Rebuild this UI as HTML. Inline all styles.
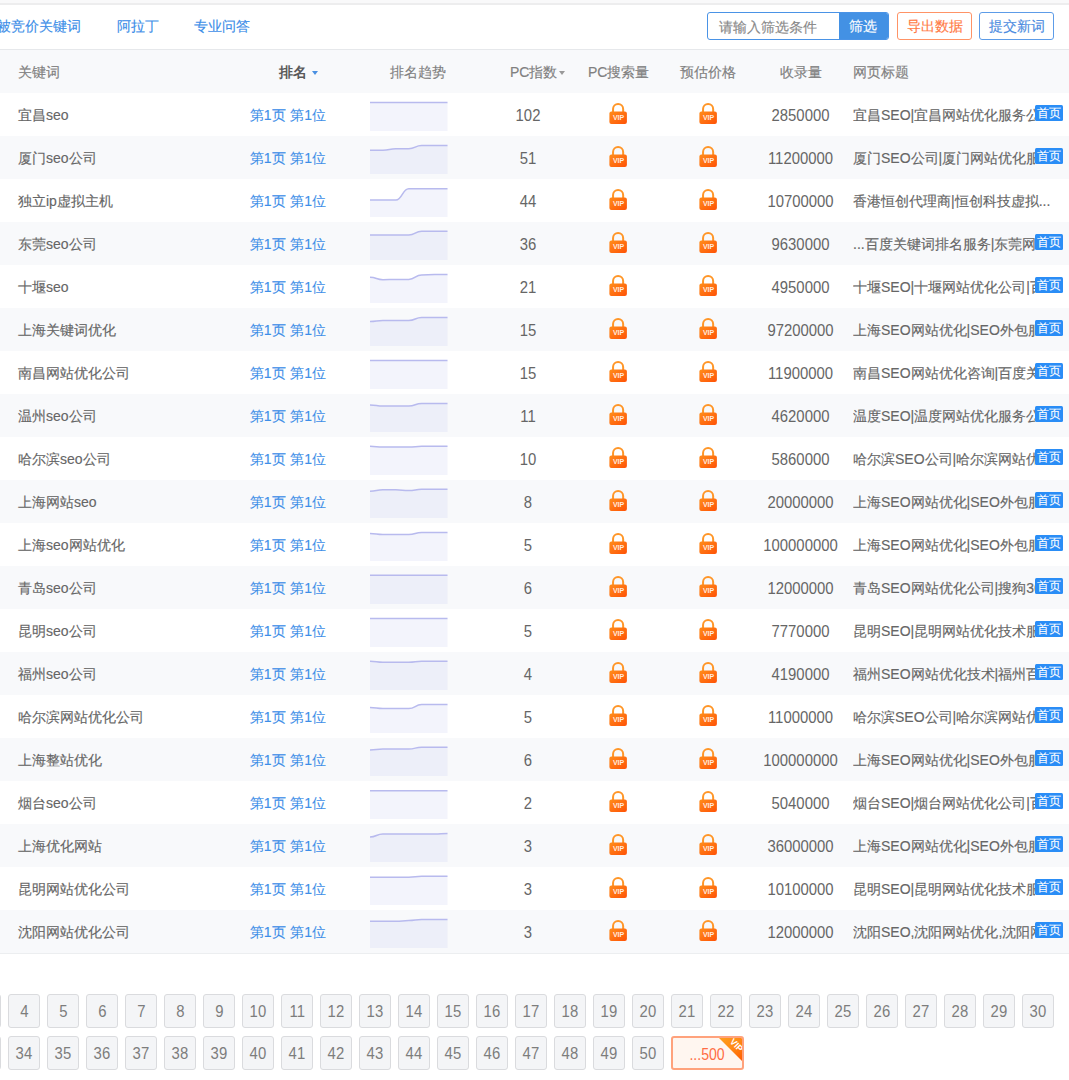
<!DOCTYPE html>
<html><head><meta charset="utf-8"><style>
*{margin:0;padding:0;box-sizing:border-box}
html,body{width:1069px;height:1080px;overflow:hidden;background:#fff;font-family:"Liberation Sans",sans-serif;font-size:14px;color:#666;-webkit-text-stroke:0.15px currentColor}
.topstrip{position:absolute;left:0;top:0;width:1069px;height:3px;background:#f9f9fa}
.topline{position:absolute;left:0;top:3px;width:1069px;height:2px;background:#ededee}
.tab{position:absolute;top:17px;line-height:18px;color:#3d8ee8;font-size:14px;white-space:nowrap}
.inp{position:absolute;left:707px;top:12px;width:182px;height:28px;border:1px solid #4a93e6;border-radius:3px;overflow:hidden}
.inp .ph{position:absolute;left:11px;top:5px;line-height:18px;color:#888}
.inp .btn{position:absolute;left:131px;top:0;width:51px;height:26px;background:#4391e4;color:#fff;text-align:center;line-height:26px;text-indent:-3px}
.ob{position:absolute;top:12px;height:28px;border:1px solid #ff9366;border-radius:3px;color:#ff7a45;text-align:center;line-height:26px;width:75px}
.bb{position:absolute;top:12px;height:28px;border:1px solid #5d9ce8;border-radius:3px;color:#4b8be0;text-align:center;line-height:26px;width:75px}
.hdr{position:absolute;left:0;top:49px;width:1069px;height:44px;background:#f8f9fb;border-top:1px solid #e6e8eb}
.h{position:absolute;top:13px;line-height:18px;color:#808080;white-space:nowrap}
.arr{display:inline-block;width:0;height:0;border-left:3.5px solid transparent;border-right:3.5px solid transparent;border-top:4px solid #999;vertical-align:middle;margin-left:2px;margin-top:-1px}
.row{position:absolute;left:0;width:1069px;height:43px;background:#fff}
.row.even{background:#f8f9fb}
.c{position:absolute;top:13px;line-height:18px;white-space:nowrap;color:#666}
.kw{left:18px}
.rk{left:249.5px;color:#3d8ee8;letter-spacing:0.2px;-webkit-text-stroke:0.1px currentColor}
.spw{position:absolute;left:368.6px;top:0}
.sp{display:block}
.ix{left:478px;width:100px;text-align:center;font-size:16px;top:13.5px;transform:scaleX(0.93);-webkit-text-stroke:0}
.l1{left:609px;top:9px}
.l2{left:699px;top:9px}
.lk{display:block}
.ct{left:740px;width:121px;text-align:center;font-size:16px;top:13.5px;transform:scaleX(0.93);-webkit-text-stroke:0}
.tt{left:853px;width:210px;overflow:hidden}
.row .c.tt.cl{width:182px}
.badge{position:absolute;left:1035px;top:12px;width:28px;height:16px;overflow:hidden;background:#2a8df6;color:#fff;font-size:12px;line-height:16px;text-align:center;letter-spacing:0.5px;text-indent:0.5px;-webkit-text-stroke:0.1px #fff;z-index:1;border-radius:1.5px}
.bottomline{position:absolute;left:0;top:953px;width:1069px;height:1px;background:#eceef0}
.pg{position:absolute;width:32px;height:34px;border:1px solid #dadbde;border-radius:3px;background:#f4f5f7;color:#7d7d7d;text-align:center;line-height:33px;font-size:16px;-webkit-text-stroke:0}
.pg.vip{width:73px;border:2px solid #ffa27c;background:#fff6f0;color:#ff6d45;line-height:33px;overflow:hidden}
.pn{display:inline-block;transform:scaleX(0.93)}
.tri{position:absolute;right:-1px;top:-1px;width:25px;height:25px;background:linear-gradient(135deg,#ffa01e 0%,#ff8a14 50%,#ff5800 100%);clip-path:polygon(0 0,100% 0,100% 100%)}
.vtx{position:absolute;right:-2px;top:3px;font-size:9px;line-height:9px;color:#fff;transform:rotate(45deg);font-weight:bold}
</style></head><body>
<div class="topstrip"></div><div class="topline"></div>
<div class="tab" style="left:-3px">被竞价关键词</div>
<div class="tab" style="left:117px">阿拉丁</div>
<div class="tab" style="left:194px">专业问答</div>
<div class="inp"><span class="ph">请输入筛选条件</span><div class="btn">筛选</div></div>
<div class="ob" style="left:897px">导出数据</div>
<div class="bb" style="left:979px">提交新词</div>
<div class="hdr">
<div class="h" style="left:18px">关键词</div>
<div class="h" style="left:279px;font-weight:bold;color:#5a5a5a;-webkit-text-stroke:0">排名<span class="arr" style="border-top-color:#4a90e2;margin-left:4.5px;margin-top:0px"></span></div>
<div class="h" style="left:390px">排名趋势</div>
<div class="h" style="left:510px">PC指数<span class="arr"></span></div>
<div class="h" style="left:588px">PC搜索量</div>
<div class="h" style="left:680px">预估价格</div>
<div class="h" style="left:780px">收录量</div>
<div class="h" style="left:853px">网页标题</div>
</div>
<div class="row" style="top:93px">
<div class="c kw">宜昌seo</div>
<div class="c rk">第1页 第1位</div>
<div class="spw"><svg class="sp" width="79.5" height="43" viewBox="-1 0 79.5 43"><path d="M0.00,9.50 C6.46,9.50 6.46,9.50 12.92,9.50 C19.38,9.50 19.38,9.50 25.83,9.50 C32.29,9.50 32.29,9.50 38.75,9.50 C45.21,9.50 45.21,9.50 51.67,9.50 C58.12,9.50 58.12,9.50 64.58,9.50 C71.04,9.50 71.04,9.50 77.50,9.50 L77.50,38 L0,38 Z" fill="rgba(200,205,240,0.22)"/><path d="M0.00,9.50 C6.46,9.50 6.46,9.50 12.92,9.50 C19.38,9.50 19.38,9.50 25.83,9.50 C32.29,9.50 32.29,9.50 38.75,9.50 C45.21,9.50 45.21,9.50 51.67,9.50 C58.12,9.50 58.12,9.50 64.58,9.50 C71.04,9.50 71.04,9.50 77.50,9.50" fill="none" stroke="#b8baee" stroke-width="1.5"/></svg></div>
<div class="c ix">102</div>
<div class="c l1"><svg class="lk" width="18" height="24" viewBox="0 0 18 24"><defs><linearGradient id="lg0a" x1="0" y1="0" x2="1" y2="1"><stop offset="0" stop-color="#ff8d1c"/><stop offset="1" stop-color="#ff5206"/></linearGradient></defs><path d="M4.05,10 V7.05 A5.05,5.05 0 0 1 14.15,7.05 V10" fill="none" stroke="#ff9628" stroke-width="2"/><rect x="0.4" y="9.6" width="17.5" height="12.5" rx="2" fill="url(#lg0a)"/><text x="9.6" y="18.4" font-family="Liberation Sans" font-weight="bold" font-size="7" fill="#fff" fill-opacity="0.88" text-anchor="middle">VIP</text></svg></div>
<div class="c l2"><svg class="lk" width="18" height="24" viewBox="0 0 18 24"><defs><linearGradient id="lg0b" x1="0" y1="0" x2="1" y2="1"><stop offset="0" stop-color="#ff8d1c"/><stop offset="1" stop-color="#ff5206"/></linearGradient></defs><path d="M4.05,10 V7.05 A5.05,5.05 0 0 1 14.15,7.05 V10" fill="none" stroke="#ff9628" stroke-width="2"/><rect x="0.4" y="9.6" width="17.5" height="12.5" rx="2" fill="url(#lg0b)"/><text x="9.6" y="18.4" font-family="Liberation Sans" font-weight="bold" font-size="7" fill="#fff" fill-opacity="0.88" text-anchor="middle">VIP</text></svg></div>
<div class="c ct">2850000</div>
<div class="c tt cl"><span class="tx">宜昌SEO|宜昌网站优化服务公司</span></div><div class="badge">首页</div>
</div><div class="row even" style="top:136px">
<div class="c kw">厦门seo公司</div>
<div class="c rk">第1页 第1位</div>
<div class="spw"><svg class="sp" width="79.5" height="43" viewBox="-1 0 79.5 43"><path d="M0.00,14.20 C6.46,14.20 6.46,14.20 12.92,14.20 C19.38,14.20 19.38,12.70 25.83,12.70 C32.29,12.70 32.29,12.70 38.75,12.70 C45.21,12.70 45.21,9.60 51.67,9.60 C58.12,9.60 58.12,9.60 64.58,9.60 C71.04,9.60 71.04,9.60 77.50,9.60 L77.50,38 L0,38 Z" fill="rgba(200,205,240,0.22)"/><path d="M0.00,14.20 C6.46,14.20 6.46,14.20 12.92,14.20 C19.38,14.20 19.38,12.70 25.83,12.70 C32.29,12.70 32.29,12.70 38.75,12.70 C45.21,12.70 45.21,9.60 51.67,9.60 C58.12,9.60 58.12,9.60 64.58,9.60 C71.04,9.60 71.04,9.60 77.50,9.60" fill="none" stroke="#b8baee" stroke-width="1.5"/></svg></div>
<div class="c ix">51</div>
<div class="c l1"><svg class="lk" width="18" height="24" viewBox="0 0 18 24"><defs><linearGradient id="lg1a" x1="0" y1="0" x2="1" y2="1"><stop offset="0" stop-color="#ff8d1c"/><stop offset="1" stop-color="#ff5206"/></linearGradient></defs><path d="M4.05,10 V7.05 A5.05,5.05 0 0 1 14.15,7.05 V10" fill="none" stroke="#ff9628" stroke-width="2"/><rect x="0.4" y="9.6" width="17.5" height="12.5" rx="2" fill="url(#lg1a)"/><text x="9.6" y="18.4" font-family="Liberation Sans" font-weight="bold" font-size="7" fill="#fff" fill-opacity="0.88" text-anchor="middle">VIP</text></svg></div>
<div class="c l2"><svg class="lk" width="18" height="24" viewBox="0 0 18 24"><defs><linearGradient id="lg1b" x1="0" y1="0" x2="1" y2="1"><stop offset="0" stop-color="#ff8d1c"/><stop offset="1" stop-color="#ff5206"/></linearGradient></defs><path d="M4.05,10 V7.05 A5.05,5.05 0 0 1 14.15,7.05 V10" fill="none" stroke="#ff9628" stroke-width="2"/><rect x="0.4" y="9.6" width="17.5" height="12.5" rx="2" fill="url(#lg1b)"/><text x="9.6" y="18.4" font-family="Liberation Sans" font-weight="bold" font-size="7" fill="#fff" fill-opacity="0.88" text-anchor="middle">VIP</text></svg></div>
<div class="c ct">11200000</div>
<div class="c tt cl"><span class="tx">厦门SEO公司|厦门网站优化服务</span></div><div class="badge">首页</div>
</div><div class="row" style="top:179px">
<div class="c kw">独立ip虚拟主机</div>
<div class="c rk">第1页 第1位</div>
<div class="spw"><svg class="sp" width="79.5" height="43" viewBox="-1 0 79.5 43"><path d="M0.00,21.00 C6.46,21.00 6.46,21.00 12.92,21.00 C19.38,21.00 19.38,21.00 25.83,21.00 C32.29,21.00 32.29,9.70 38.75,9.70 C45.21,9.70 45.21,9.70 51.67,9.70 C58.12,9.70 58.12,9.70 64.58,9.70 C71.04,9.70 71.04,9.70 77.50,9.70 L77.50,38 L0,38 Z" fill="rgba(200,205,240,0.22)"/><path d="M0.00,21.00 C6.46,21.00 6.46,21.00 12.92,21.00 C19.38,21.00 19.38,21.00 25.83,21.00 C32.29,21.00 32.29,9.70 38.75,9.70 C45.21,9.70 45.21,9.70 51.67,9.70 C58.12,9.70 58.12,9.70 64.58,9.70 C71.04,9.70 71.04,9.70 77.50,9.70" fill="none" stroke="#b8baee" stroke-width="1.5"/></svg></div>
<div class="c ix">44</div>
<div class="c l1"><svg class="lk" width="18" height="24" viewBox="0 0 18 24"><defs><linearGradient id="lg2a" x1="0" y1="0" x2="1" y2="1"><stop offset="0" stop-color="#ff8d1c"/><stop offset="1" stop-color="#ff5206"/></linearGradient></defs><path d="M4.05,10 V7.05 A5.05,5.05 0 0 1 14.15,7.05 V10" fill="none" stroke="#ff9628" stroke-width="2"/><rect x="0.4" y="9.6" width="17.5" height="12.5" rx="2" fill="url(#lg2a)"/><text x="9.6" y="18.4" font-family="Liberation Sans" font-weight="bold" font-size="7" fill="#fff" fill-opacity="0.88" text-anchor="middle">VIP</text></svg></div>
<div class="c l2"><svg class="lk" width="18" height="24" viewBox="0 0 18 24"><defs><linearGradient id="lg2b" x1="0" y1="0" x2="1" y2="1"><stop offset="0" stop-color="#ff8d1c"/><stop offset="1" stop-color="#ff5206"/></linearGradient></defs><path d="M4.05,10 V7.05 A5.05,5.05 0 0 1 14.15,7.05 V10" fill="none" stroke="#ff9628" stroke-width="2"/><rect x="0.4" y="9.6" width="17.5" height="12.5" rx="2" fill="url(#lg2b)"/><text x="9.6" y="18.4" font-family="Liberation Sans" font-weight="bold" font-size="7" fill="#fff" fill-opacity="0.88" text-anchor="middle">VIP</text></svg></div>
<div class="c ct">10700000</div>
<div class="c tt"><span class="tx">香港恒创代理商|恒创科技虚拟...</span></div>
</div><div class="row even" style="top:222px">
<div class="c kw">东莞seo公司</div>
<div class="c rk">第1页 第1位</div>
<div class="spw"><svg class="sp" width="79.5" height="43" viewBox="-1 0 79.5 43"><path d="M0.00,12.90 C6.46,12.90 6.46,12.90 12.92,12.90 C19.38,12.90 19.38,12.90 25.83,12.90 C32.29,12.90 32.29,12.90 38.75,12.90 C45.21,12.90 45.21,9.30 51.67,9.30 C58.12,9.30 58.12,9.30 64.58,9.30 C71.04,9.30 71.04,9.30 77.50,9.30 L77.50,38 L0,38 Z" fill="rgba(200,205,240,0.22)"/><path d="M0.00,12.90 C6.46,12.90 6.46,12.90 12.92,12.90 C19.38,12.90 19.38,12.90 25.83,12.90 C32.29,12.90 32.29,12.90 38.75,12.90 C45.21,12.90 45.21,9.30 51.67,9.30 C58.12,9.30 58.12,9.30 64.58,9.30 C71.04,9.30 71.04,9.30 77.50,9.30" fill="none" stroke="#b8baee" stroke-width="1.5"/></svg></div>
<div class="c ix">36</div>
<div class="c l1"><svg class="lk" width="18" height="24" viewBox="0 0 18 24"><defs><linearGradient id="lg3a" x1="0" y1="0" x2="1" y2="1"><stop offset="0" stop-color="#ff8d1c"/><stop offset="1" stop-color="#ff5206"/></linearGradient></defs><path d="M4.05,10 V7.05 A5.05,5.05 0 0 1 14.15,7.05 V10" fill="none" stroke="#ff9628" stroke-width="2"/><rect x="0.4" y="9.6" width="17.5" height="12.5" rx="2" fill="url(#lg3a)"/><text x="9.6" y="18.4" font-family="Liberation Sans" font-weight="bold" font-size="7" fill="#fff" fill-opacity="0.88" text-anchor="middle">VIP</text></svg></div>
<div class="c l2"><svg class="lk" width="18" height="24" viewBox="0 0 18 24"><defs><linearGradient id="lg3b" x1="0" y1="0" x2="1" y2="1"><stop offset="0" stop-color="#ff8d1c"/><stop offset="1" stop-color="#ff5206"/></linearGradient></defs><path d="M4.05,10 V7.05 A5.05,5.05 0 0 1 14.15,7.05 V10" fill="none" stroke="#ff9628" stroke-width="2"/><rect x="0.4" y="9.6" width="17.5" height="12.5" rx="2" fill="url(#lg3b)"/><text x="9.6" y="18.4" font-family="Liberation Sans" font-weight="bold" font-size="7" fill="#fff" fill-opacity="0.88" text-anchor="middle">VIP</text></svg></div>
<div class="c ct">9630000</div>
<div class="c tt cl"><span class="tx">...百度关键词排名服务|东莞网站</span></div><div class="badge">首页</div>
</div><div class="row" style="top:265px">
<div class="c kw">十堰seo</div>
<div class="c rk">第1页 第1位</div>
<div class="spw"><svg class="sp" width="79.5" height="43" viewBox="-1 0 79.5 43"><path d="M0.00,12.30 C6.46,12.30 6.46,14.70 12.92,14.70 C19.38,14.70 19.38,14.50 25.83,14.50 C32.29,14.50 32.29,14.50 38.75,14.50 C45.21,14.50 45.21,9.90 51.67,9.90 C58.12,9.90 58.12,9.60 64.58,9.60 C71.04,9.60 71.04,9.60 77.50,9.60 L77.50,38 L0,38 Z" fill="rgba(200,205,240,0.22)"/><path d="M0.00,12.30 C6.46,12.30 6.46,14.70 12.92,14.70 C19.38,14.70 19.38,14.50 25.83,14.50 C32.29,14.50 32.29,14.50 38.75,14.50 C45.21,14.50 45.21,9.90 51.67,9.90 C58.12,9.90 58.12,9.60 64.58,9.60 C71.04,9.60 71.04,9.60 77.50,9.60" fill="none" stroke="#b8baee" stroke-width="1.5"/></svg></div>
<div class="c ix">21</div>
<div class="c l1"><svg class="lk" width="18" height="24" viewBox="0 0 18 24"><defs><linearGradient id="lg4a" x1="0" y1="0" x2="1" y2="1"><stop offset="0" stop-color="#ff8d1c"/><stop offset="1" stop-color="#ff5206"/></linearGradient></defs><path d="M4.05,10 V7.05 A5.05,5.05 0 0 1 14.15,7.05 V10" fill="none" stroke="#ff9628" stroke-width="2"/><rect x="0.4" y="9.6" width="17.5" height="12.5" rx="2" fill="url(#lg4a)"/><text x="9.6" y="18.4" font-family="Liberation Sans" font-weight="bold" font-size="7" fill="#fff" fill-opacity="0.88" text-anchor="middle">VIP</text></svg></div>
<div class="c l2"><svg class="lk" width="18" height="24" viewBox="0 0 18 24"><defs><linearGradient id="lg4b" x1="0" y1="0" x2="1" y2="1"><stop offset="0" stop-color="#ff8d1c"/><stop offset="1" stop-color="#ff5206"/></linearGradient></defs><path d="M4.05,10 V7.05 A5.05,5.05 0 0 1 14.15,7.05 V10" fill="none" stroke="#ff9628" stroke-width="2"/><rect x="0.4" y="9.6" width="17.5" height="12.5" rx="2" fill="url(#lg4b)"/><text x="9.6" y="18.4" font-family="Liberation Sans" font-weight="bold" font-size="7" fill="#fff" fill-opacity="0.88" text-anchor="middle">VIP</text></svg></div>
<div class="c ct">4950000</div>
<div class="c tt cl"><span class="tx">十堰SEO|十堰网站优化公司|百度</span></div><div class="badge">首页</div>
</div><div class="row even" style="top:308px">
<div class="c kw">上海关键词优化</div>
<div class="c rk">第1页 第1位</div>
<div class="spw"><svg class="sp" width="79.5" height="43" viewBox="-1 0 79.5 43"><path d="M0.00,13.60 C6.46,13.60 6.46,12.60 12.92,12.60 C19.38,12.60 19.38,12.60 25.83,12.60 C32.29,12.60 32.29,12.60 38.75,12.60 C45.21,12.60 45.21,9.50 51.67,9.50 C58.12,9.50 58.12,9.50 64.58,9.50 C71.04,9.50 71.04,9.50 77.50,9.50 L77.50,38 L0,38 Z" fill="rgba(200,205,240,0.22)"/><path d="M0.00,13.60 C6.46,13.60 6.46,12.60 12.92,12.60 C19.38,12.60 19.38,12.60 25.83,12.60 C32.29,12.60 32.29,12.60 38.75,12.60 C45.21,12.60 45.21,9.50 51.67,9.50 C58.12,9.50 58.12,9.50 64.58,9.50 C71.04,9.50 71.04,9.50 77.50,9.50" fill="none" stroke="#b8baee" stroke-width="1.5"/></svg></div>
<div class="c ix">15</div>
<div class="c l1"><svg class="lk" width="18" height="24" viewBox="0 0 18 24"><defs><linearGradient id="lg5a" x1="0" y1="0" x2="1" y2="1"><stop offset="0" stop-color="#ff8d1c"/><stop offset="1" stop-color="#ff5206"/></linearGradient></defs><path d="M4.05,10 V7.05 A5.05,5.05 0 0 1 14.15,7.05 V10" fill="none" stroke="#ff9628" stroke-width="2"/><rect x="0.4" y="9.6" width="17.5" height="12.5" rx="2" fill="url(#lg5a)"/><text x="9.6" y="18.4" font-family="Liberation Sans" font-weight="bold" font-size="7" fill="#fff" fill-opacity="0.88" text-anchor="middle">VIP</text></svg></div>
<div class="c l2"><svg class="lk" width="18" height="24" viewBox="0 0 18 24"><defs><linearGradient id="lg5b" x1="0" y1="0" x2="1" y2="1"><stop offset="0" stop-color="#ff8d1c"/><stop offset="1" stop-color="#ff5206"/></linearGradient></defs><path d="M4.05,10 V7.05 A5.05,5.05 0 0 1 14.15,7.05 V10" fill="none" stroke="#ff9628" stroke-width="2"/><rect x="0.4" y="9.6" width="17.5" height="12.5" rx="2" fill="url(#lg5b)"/><text x="9.6" y="18.4" font-family="Liberation Sans" font-weight="bold" font-size="7" fill="#fff" fill-opacity="0.88" text-anchor="middle">VIP</text></svg></div>
<div class="c ct">97200000</div>
<div class="c tt cl"><span class="tx">上海SEO网站优化|SEO外包服务</span></div><div class="badge">首页</div>
</div><div class="row" style="top:351px">
<div class="c kw">南昌网站优化公司</div>
<div class="c rk">第1页 第1位</div>
<div class="spw"><svg class="sp" width="79.5" height="43" viewBox="-1 0 79.5 43"><path d="M0.00,9.60 C6.46,9.60 6.46,9.60 12.92,9.60 C19.38,9.60 19.38,9.60 25.83,9.60 C32.29,9.60 32.29,9.60 38.75,9.60 C45.21,9.60 45.21,9.60 51.67,9.60 C58.12,9.60 58.12,9.60 64.58,9.60 C71.04,9.60 71.04,9.60 77.50,9.60 L77.50,38 L0,38 Z" fill="rgba(200,205,240,0.22)"/><path d="M0.00,9.60 C6.46,9.60 6.46,9.60 12.92,9.60 C19.38,9.60 19.38,9.60 25.83,9.60 C32.29,9.60 32.29,9.60 38.75,9.60 C45.21,9.60 45.21,9.60 51.67,9.60 C58.12,9.60 58.12,9.60 64.58,9.60 C71.04,9.60 71.04,9.60 77.50,9.60" fill="none" stroke="#b8baee" stroke-width="1.5"/></svg></div>
<div class="c ix">15</div>
<div class="c l1"><svg class="lk" width="18" height="24" viewBox="0 0 18 24"><defs><linearGradient id="lg6a" x1="0" y1="0" x2="1" y2="1"><stop offset="0" stop-color="#ff8d1c"/><stop offset="1" stop-color="#ff5206"/></linearGradient></defs><path d="M4.05,10 V7.05 A5.05,5.05 0 0 1 14.15,7.05 V10" fill="none" stroke="#ff9628" stroke-width="2"/><rect x="0.4" y="9.6" width="17.5" height="12.5" rx="2" fill="url(#lg6a)"/><text x="9.6" y="18.4" font-family="Liberation Sans" font-weight="bold" font-size="7" fill="#fff" fill-opacity="0.88" text-anchor="middle">VIP</text></svg></div>
<div class="c l2"><svg class="lk" width="18" height="24" viewBox="0 0 18 24"><defs><linearGradient id="lg6b" x1="0" y1="0" x2="1" y2="1"><stop offset="0" stop-color="#ff8d1c"/><stop offset="1" stop-color="#ff5206"/></linearGradient></defs><path d="M4.05,10 V7.05 A5.05,5.05 0 0 1 14.15,7.05 V10" fill="none" stroke="#ff9628" stroke-width="2"/><rect x="0.4" y="9.6" width="17.5" height="12.5" rx="2" fill="url(#lg6b)"/><text x="9.6" y="18.4" font-family="Liberation Sans" font-weight="bold" font-size="7" fill="#fff" fill-opacity="0.88" text-anchor="middle">VIP</text></svg></div>
<div class="c ct">11900000</div>
<div class="c tt cl"><span class="tx">南昌SEO网站优化咨询|百度关键</span></div><div class="badge">首页</div>
</div><div class="row even" style="top:394px">
<div class="c kw">温州seo公司</div>
<div class="c rk">第1页 第1位</div>
<div class="spw"><svg class="sp" width="79.5" height="43" viewBox="-1 0 79.5 43"><path d="M0.00,10.90 C6.46,10.90 6.46,12.00 12.92,12.00 C19.38,12.00 19.38,12.00 25.83,12.00 C32.29,12.00 32.29,12.00 38.75,12.00 C45.21,12.00 45.21,9.40 51.67,9.40 C58.12,9.40 58.12,9.40 64.58,9.40 C71.04,9.40 71.04,9.40 77.50,9.40 L77.50,38 L0,38 Z" fill="rgba(200,205,240,0.22)"/><path d="M0.00,10.90 C6.46,10.90 6.46,12.00 12.92,12.00 C19.38,12.00 19.38,12.00 25.83,12.00 C32.29,12.00 32.29,12.00 38.75,12.00 C45.21,12.00 45.21,9.40 51.67,9.40 C58.12,9.40 58.12,9.40 64.58,9.40 C71.04,9.40 71.04,9.40 77.50,9.40" fill="none" stroke="#b8baee" stroke-width="1.5"/></svg></div>
<div class="c ix">11</div>
<div class="c l1"><svg class="lk" width="18" height="24" viewBox="0 0 18 24"><defs><linearGradient id="lg7a" x1="0" y1="0" x2="1" y2="1"><stop offset="0" stop-color="#ff8d1c"/><stop offset="1" stop-color="#ff5206"/></linearGradient></defs><path d="M4.05,10 V7.05 A5.05,5.05 0 0 1 14.15,7.05 V10" fill="none" stroke="#ff9628" stroke-width="2"/><rect x="0.4" y="9.6" width="17.5" height="12.5" rx="2" fill="url(#lg7a)"/><text x="9.6" y="18.4" font-family="Liberation Sans" font-weight="bold" font-size="7" fill="#fff" fill-opacity="0.88" text-anchor="middle">VIP</text></svg></div>
<div class="c l2"><svg class="lk" width="18" height="24" viewBox="0 0 18 24"><defs><linearGradient id="lg7b" x1="0" y1="0" x2="1" y2="1"><stop offset="0" stop-color="#ff8d1c"/><stop offset="1" stop-color="#ff5206"/></linearGradient></defs><path d="M4.05,10 V7.05 A5.05,5.05 0 0 1 14.15,7.05 V10" fill="none" stroke="#ff9628" stroke-width="2"/><rect x="0.4" y="9.6" width="17.5" height="12.5" rx="2" fill="url(#lg7b)"/><text x="9.6" y="18.4" font-family="Liberation Sans" font-weight="bold" font-size="7" fill="#fff" fill-opacity="0.88" text-anchor="middle">VIP</text></svg></div>
<div class="c ct">4620000</div>
<div class="c tt cl"><span class="tx">温度SEO|温度网站优化服务公司</span></div><div class="badge">首页</div>
</div><div class="row" style="top:437px">
<div class="c kw">哈尔滨seo公司</div>
<div class="c rk">第1页 第1位</div>
<div class="spw"><svg class="sp" width="79.5" height="43" viewBox="-1 0 79.5 43"><path d="M0.00,9.30 C6.46,9.30 6.46,10.00 12.92,10.00 C19.38,10.00 19.38,10.00 25.83,10.00 C32.29,10.00 32.29,10.00 38.75,10.00 C45.21,10.00 45.21,9.30 51.67,9.30 C58.12,9.30 58.12,9.30 64.58,9.30 C71.04,9.30 71.04,9.30 77.50,9.30 L77.50,38 L0,38 Z" fill="rgba(200,205,240,0.22)"/><path d="M0.00,9.30 C6.46,9.30 6.46,10.00 12.92,10.00 C19.38,10.00 19.38,10.00 25.83,10.00 C32.29,10.00 32.29,10.00 38.75,10.00 C45.21,10.00 45.21,9.30 51.67,9.30 C58.12,9.30 58.12,9.30 64.58,9.30 C71.04,9.30 71.04,9.30 77.50,9.30" fill="none" stroke="#b8baee" stroke-width="1.5"/></svg></div>
<div class="c ix">10</div>
<div class="c l1"><svg class="lk" width="18" height="24" viewBox="0 0 18 24"><defs><linearGradient id="lg8a" x1="0" y1="0" x2="1" y2="1"><stop offset="0" stop-color="#ff8d1c"/><stop offset="1" stop-color="#ff5206"/></linearGradient></defs><path d="M4.05,10 V7.05 A5.05,5.05 0 0 1 14.15,7.05 V10" fill="none" stroke="#ff9628" stroke-width="2"/><rect x="0.4" y="9.6" width="17.5" height="12.5" rx="2" fill="url(#lg8a)"/><text x="9.6" y="18.4" font-family="Liberation Sans" font-weight="bold" font-size="7" fill="#fff" fill-opacity="0.88" text-anchor="middle">VIP</text></svg></div>
<div class="c l2"><svg class="lk" width="18" height="24" viewBox="0 0 18 24"><defs><linearGradient id="lg8b" x1="0" y1="0" x2="1" y2="1"><stop offset="0" stop-color="#ff8d1c"/><stop offset="1" stop-color="#ff5206"/></linearGradient></defs><path d="M4.05,10 V7.05 A5.05,5.05 0 0 1 14.15,7.05 V10" fill="none" stroke="#ff9628" stroke-width="2"/><rect x="0.4" y="9.6" width="17.5" height="12.5" rx="2" fill="url(#lg8b)"/><text x="9.6" y="18.4" font-family="Liberation Sans" font-weight="bold" font-size="7" fill="#fff" fill-opacity="0.88" text-anchor="middle">VIP</text></svg></div>
<div class="c ct">5860000</div>
<div class="c tt cl"><span class="tx">哈尔滨SEO公司|哈尔滨网站优化</span></div><div class="badge">首页</div>
</div><div class="row even" style="top:480px">
<div class="c kw">上海网站seo</div>
<div class="c rk">第1页 第1位</div>
<div class="spw"><svg class="sp" width="79.5" height="43" viewBox="-1 0 79.5 43"><path d="M0.00,11.20 C6.46,11.20 6.46,9.80 12.92,9.80 C19.38,9.80 19.38,9.80 25.83,9.80 C32.29,9.80 32.29,10.60 38.75,10.60 C45.21,10.60 45.21,9.20 51.67,9.20 C58.12,9.20 58.12,9.20 64.58,9.20 C71.04,9.20 71.04,9.20 77.50,9.20 L77.50,38 L0,38 Z" fill="rgba(200,205,240,0.22)"/><path d="M0.00,11.20 C6.46,11.20 6.46,9.80 12.92,9.80 C19.38,9.80 19.38,9.80 25.83,9.80 C32.29,9.80 32.29,10.60 38.75,10.60 C45.21,10.60 45.21,9.20 51.67,9.20 C58.12,9.20 58.12,9.20 64.58,9.20 C71.04,9.20 71.04,9.20 77.50,9.20" fill="none" stroke="#b8baee" stroke-width="1.5"/></svg></div>
<div class="c ix">8</div>
<div class="c l1"><svg class="lk" width="18" height="24" viewBox="0 0 18 24"><defs><linearGradient id="lg9a" x1="0" y1="0" x2="1" y2="1"><stop offset="0" stop-color="#ff8d1c"/><stop offset="1" stop-color="#ff5206"/></linearGradient></defs><path d="M4.05,10 V7.05 A5.05,5.05 0 0 1 14.15,7.05 V10" fill="none" stroke="#ff9628" stroke-width="2"/><rect x="0.4" y="9.6" width="17.5" height="12.5" rx="2" fill="url(#lg9a)"/><text x="9.6" y="18.4" font-family="Liberation Sans" font-weight="bold" font-size="7" fill="#fff" fill-opacity="0.88" text-anchor="middle">VIP</text></svg></div>
<div class="c l2"><svg class="lk" width="18" height="24" viewBox="0 0 18 24"><defs><linearGradient id="lg9b" x1="0" y1="0" x2="1" y2="1"><stop offset="0" stop-color="#ff8d1c"/><stop offset="1" stop-color="#ff5206"/></linearGradient></defs><path d="M4.05,10 V7.05 A5.05,5.05 0 0 1 14.15,7.05 V10" fill="none" stroke="#ff9628" stroke-width="2"/><rect x="0.4" y="9.6" width="17.5" height="12.5" rx="2" fill="url(#lg9b)"/><text x="9.6" y="18.4" font-family="Liberation Sans" font-weight="bold" font-size="7" fill="#fff" fill-opacity="0.88" text-anchor="middle">VIP</text></svg></div>
<div class="c ct">20000000</div>
<div class="c tt cl"><span class="tx">上海SEO网站优化|SEO外包服务</span></div><div class="badge">首页</div>
</div><div class="row" style="top:523px">
<div class="c kw">上海seo网站优化</div>
<div class="c rk">第1页 第1位</div>
<div class="spw"><svg class="sp" width="79.5" height="43" viewBox="-1 0 79.5 43"><path d="M0.00,10.40 C6.46,10.40 6.46,11.40 12.92,11.40 C19.38,11.40 19.38,11.40 25.83,11.40 C32.29,11.40 32.29,11.40 38.75,11.40 C45.21,11.40 45.21,9.50 51.67,9.50 C58.12,9.50 58.12,9.50 64.58,9.50 C71.04,9.50 71.04,9.50 77.50,9.50 L77.50,38 L0,38 Z" fill="rgba(200,205,240,0.22)"/><path d="M0.00,10.40 C6.46,10.40 6.46,11.40 12.92,11.40 C19.38,11.40 19.38,11.40 25.83,11.40 C32.29,11.40 32.29,11.40 38.75,11.40 C45.21,11.40 45.21,9.50 51.67,9.50 C58.12,9.50 58.12,9.50 64.58,9.50 C71.04,9.50 71.04,9.50 77.50,9.50" fill="none" stroke="#b8baee" stroke-width="1.5"/></svg></div>
<div class="c ix">5</div>
<div class="c l1"><svg class="lk" width="18" height="24" viewBox="0 0 18 24"><defs><linearGradient id="lg10a" x1="0" y1="0" x2="1" y2="1"><stop offset="0" stop-color="#ff8d1c"/><stop offset="1" stop-color="#ff5206"/></linearGradient></defs><path d="M4.05,10 V7.05 A5.05,5.05 0 0 1 14.15,7.05 V10" fill="none" stroke="#ff9628" stroke-width="2"/><rect x="0.4" y="9.6" width="17.5" height="12.5" rx="2" fill="url(#lg10a)"/><text x="9.6" y="18.4" font-family="Liberation Sans" font-weight="bold" font-size="7" fill="#fff" fill-opacity="0.88" text-anchor="middle">VIP</text></svg></div>
<div class="c l2"><svg class="lk" width="18" height="24" viewBox="0 0 18 24"><defs><linearGradient id="lg10b" x1="0" y1="0" x2="1" y2="1"><stop offset="0" stop-color="#ff8d1c"/><stop offset="1" stop-color="#ff5206"/></linearGradient></defs><path d="M4.05,10 V7.05 A5.05,5.05 0 0 1 14.15,7.05 V10" fill="none" stroke="#ff9628" stroke-width="2"/><rect x="0.4" y="9.6" width="17.5" height="12.5" rx="2" fill="url(#lg10b)"/><text x="9.6" y="18.4" font-family="Liberation Sans" font-weight="bold" font-size="7" fill="#fff" fill-opacity="0.88" text-anchor="middle">VIP</text></svg></div>
<div class="c ct">100000000</div>
<div class="c tt cl"><span class="tx">上海SEO网站优化|SEO外包服务</span></div><div class="badge">首页</div>
</div><div class="row even" style="top:566px">
<div class="c kw">青岛seo公司</div>
<div class="c rk">第1页 第1位</div>
<div class="spw"><svg class="sp" width="79.5" height="43" viewBox="-1 0 79.5 43"><path d="M0.00,9.30 C6.46,9.30 6.46,9.30 12.92,9.30 C19.38,9.30 19.38,9.30 25.83,9.30 C32.29,9.30 32.29,9.30 38.75,9.30 C45.21,9.30 45.21,9.30 51.67,9.30 C58.12,9.30 58.12,9.30 64.58,9.30 C71.04,9.30 71.04,9.30 77.50,9.30 L77.50,38 L0,38 Z" fill="rgba(200,205,240,0.22)"/><path d="M0.00,9.30 C6.46,9.30 6.46,9.30 12.92,9.30 C19.38,9.30 19.38,9.30 25.83,9.30 C32.29,9.30 32.29,9.30 38.75,9.30 C45.21,9.30 45.21,9.30 51.67,9.30 C58.12,9.30 58.12,9.30 64.58,9.30 C71.04,9.30 71.04,9.30 77.50,9.30" fill="none" stroke="#b8baee" stroke-width="1.5"/></svg></div>
<div class="c ix">6</div>
<div class="c l1"><svg class="lk" width="18" height="24" viewBox="0 0 18 24"><defs><linearGradient id="lg11a" x1="0" y1="0" x2="1" y2="1"><stop offset="0" stop-color="#ff8d1c"/><stop offset="1" stop-color="#ff5206"/></linearGradient></defs><path d="M4.05,10 V7.05 A5.05,5.05 0 0 1 14.15,7.05 V10" fill="none" stroke="#ff9628" stroke-width="2"/><rect x="0.4" y="9.6" width="17.5" height="12.5" rx="2" fill="url(#lg11a)"/><text x="9.6" y="18.4" font-family="Liberation Sans" font-weight="bold" font-size="7" fill="#fff" fill-opacity="0.88" text-anchor="middle">VIP</text></svg></div>
<div class="c l2"><svg class="lk" width="18" height="24" viewBox="0 0 18 24"><defs><linearGradient id="lg11b" x1="0" y1="0" x2="1" y2="1"><stop offset="0" stop-color="#ff8d1c"/><stop offset="1" stop-color="#ff5206"/></linearGradient></defs><path d="M4.05,10 V7.05 A5.05,5.05 0 0 1 14.15,7.05 V10" fill="none" stroke="#ff9628" stroke-width="2"/><rect x="0.4" y="9.6" width="17.5" height="12.5" rx="2" fill="url(#lg11b)"/><text x="9.6" y="18.4" font-family="Liberation Sans" font-weight="bold" font-size="7" fill="#fff" fill-opacity="0.88" text-anchor="middle">VIP</text></svg></div>
<div class="c ct">12000000</div>
<div class="c tt cl"><span class="tx">青岛SEO网站优化公司|搜狗360</span></div><div class="badge">首页</div>
</div><div class="row" style="top:609px">
<div class="c kw">昆明seo公司</div>
<div class="c rk">第1页 第1位</div>
<div class="spw"><svg class="sp" width="79.5" height="43" viewBox="-1 0 79.5 43"><path d="M0.00,9.50 C6.46,9.50 6.46,9.50 12.92,9.50 C19.38,9.50 19.38,9.50 25.83,9.50 C32.29,9.50 32.29,9.50 38.75,9.50 C45.21,9.50 45.21,9.50 51.67,9.50 C58.12,9.50 58.12,9.50 64.58,9.50 C71.04,9.50 71.04,9.50 77.50,9.50 L77.50,38 L0,38 Z" fill="rgba(200,205,240,0.22)"/><path d="M0.00,9.50 C6.46,9.50 6.46,9.50 12.92,9.50 C19.38,9.50 19.38,9.50 25.83,9.50 C32.29,9.50 32.29,9.50 38.75,9.50 C45.21,9.50 45.21,9.50 51.67,9.50 C58.12,9.50 58.12,9.50 64.58,9.50 C71.04,9.50 71.04,9.50 77.50,9.50" fill="none" stroke="#b8baee" stroke-width="1.5"/></svg></div>
<div class="c ix">5</div>
<div class="c l1"><svg class="lk" width="18" height="24" viewBox="0 0 18 24"><defs><linearGradient id="lg12a" x1="0" y1="0" x2="1" y2="1"><stop offset="0" stop-color="#ff8d1c"/><stop offset="1" stop-color="#ff5206"/></linearGradient></defs><path d="M4.05,10 V7.05 A5.05,5.05 0 0 1 14.15,7.05 V10" fill="none" stroke="#ff9628" stroke-width="2"/><rect x="0.4" y="9.6" width="17.5" height="12.5" rx="2" fill="url(#lg12a)"/><text x="9.6" y="18.4" font-family="Liberation Sans" font-weight="bold" font-size="7" fill="#fff" fill-opacity="0.88" text-anchor="middle">VIP</text></svg></div>
<div class="c l2"><svg class="lk" width="18" height="24" viewBox="0 0 18 24"><defs><linearGradient id="lg12b" x1="0" y1="0" x2="1" y2="1"><stop offset="0" stop-color="#ff8d1c"/><stop offset="1" stop-color="#ff5206"/></linearGradient></defs><path d="M4.05,10 V7.05 A5.05,5.05 0 0 1 14.15,7.05 V10" fill="none" stroke="#ff9628" stroke-width="2"/><rect x="0.4" y="9.6" width="17.5" height="12.5" rx="2" fill="url(#lg12b)"/><text x="9.6" y="18.4" font-family="Liberation Sans" font-weight="bold" font-size="7" fill="#fff" fill-opacity="0.88" text-anchor="middle">VIP</text></svg></div>
<div class="c ct">7770000</div>
<div class="c tt cl"><span class="tx">昆明SEO|昆明网站优化技术服务</span></div><div class="badge">首页</div>
</div><div class="row even" style="top:652px">
<div class="c kw">福州seo公司</div>
<div class="c rk">第1页 第1位</div>
<div class="spw"><svg class="sp" width="79.5" height="43" viewBox="-1 0 79.5 43"><path d="M0.00,9.30 C6.46,9.30 6.46,10.30 12.92,10.30 C19.38,10.30 19.38,10.30 25.83,10.30 C32.29,10.30 32.29,10.30 38.75,10.30 C45.21,10.30 45.21,9.30 51.67,9.30 C58.12,9.30 58.12,9.30 64.58,9.30 C71.04,9.30 71.04,9.30 77.50,9.30 L77.50,38 L0,38 Z" fill="rgba(200,205,240,0.22)"/><path d="M0.00,9.30 C6.46,9.30 6.46,10.30 12.92,10.30 C19.38,10.30 19.38,10.30 25.83,10.30 C32.29,10.30 32.29,10.30 38.75,10.30 C45.21,10.30 45.21,9.30 51.67,9.30 C58.12,9.30 58.12,9.30 64.58,9.30 C71.04,9.30 71.04,9.30 77.50,9.30" fill="none" stroke="#b8baee" stroke-width="1.5"/></svg></div>
<div class="c ix">4</div>
<div class="c l1"><svg class="lk" width="18" height="24" viewBox="0 0 18 24"><defs><linearGradient id="lg13a" x1="0" y1="0" x2="1" y2="1"><stop offset="0" stop-color="#ff8d1c"/><stop offset="1" stop-color="#ff5206"/></linearGradient></defs><path d="M4.05,10 V7.05 A5.05,5.05 0 0 1 14.15,7.05 V10" fill="none" stroke="#ff9628" stroke-width="2"/><rect x="0.4" y="9.6" width="17.5" height="12.5" rx="2" fill="url(#lg13a)"/><text x="9.6" y="18.4" font-family="Liberation Sans" font-weight="bold" font-size="7" fill="#fff" fill-opacity="0.88" text-anchor="middle">VIP</text></svg></div>
<div class="c l2"><svg class="lk" width="18" height="24" viewBox="0 0 18 24"><defs><linearGradient id="lg13b" x1="0" y1="0" x2="1" y2="1"><stop offset="0" stop-color="#ff8d1c"/><stop offset="1" stop-color="#ff5206"/></linearGradient></defs><path d="M4.05,10 V7.05 A5.05,5.05 0 0 1 14.15,7.05 V10" fill="none" stroke="#ff9628" stroke-width="2"/><rect x="0.4" y="9.6" width="17.5" height="12.5" rx="2" fill="url(#lg13b)"/><text x="9.6" y="18.4" font-family="Liberation Sans" font-weight="bold" font-size="7" fill="#fff" fill-opacity="0.88" text-anchor="middle">VIP</text></svg></div>
<div class="c ct">4190000</div>
<div class="c tt cl"><span class="tx">福州SEO网站优化技术|福州百度</span></div><div class="badge">首页</div>
</div><div class="row" style="top:695px">
<div class="c kw">哈尔滨网站优化公司</div>
<div class="c rk">第1页 第1位</div>
<div class="spw"><svg class="sp" width="79.5" height="43" viewBox="-1 0 79.5 43"><path d="M0.00,12.50 C6.46,12.50 6.46,13.50 12.92,13.50 C19.38,13.50 19.38,13.50 25.83,13.50 C32.29,13.50 32.29,13.50 38.75,13.50 C45.21,13.50 45.21,9.60 51.67,9.60 C58.12,9.60 58.12,9.60 64.58,9.60 C71.04,9.60 71.04,9.60 77.50,9.60 L77.50,38 L0,38 Z" fill="rgba(200,205,240,0.22)"/><path d="M0.00,12.50 C6.46,12.50 6.46,13.50 12.92,13.50 C19.38,13.50 19.38,13.50 25.83,13.50 C32.29,13.50 32.29,13.50 38.75,13.50 C45.21,13.50 45.21,9.60 51.67,9.60 C58.12,9.60 58.12,9.60 64.58,9.60 C71.04,9.60 71.04,9.60 77.50,9.60" fill="none" stroke="#b8baee" stroke-width="1.5"/></svg></div>
<div class="c ix">5</div>
<div class="c l1"><svg class="lk" width="18" height="24" viewBox="0 0 18 24"><defs><linearGradient id="lg14a" x1="0" y1="0" x2="1" y2="1"><stop offset="0" stop-color="#ff8d1c"/><stop offset="1" stop-color="#ff5206"/></linearGradient></defs><path d="M4.05,10 V7.05 A5.05,5.05 0 0 1 14.15,7.05 V10" fill="none" stroke="#ff9628" stroke-width="2"/><rect x="0.4" y="9.6" width="17.5" height="12.5" rx="2" fill="url(#lg14a)"/><text x="9.6" y="18.4" font-family="Liberation Sans" font-weight="bold" font-size="7" fill="#fff" fill-opacity="0.88" text-anchor="middle">VIP</text></svg></div>
<div class="c l2"><svg class="lk" width="18" height="24" viewBox="0 0 18 24"><defs><linearGradient id="lg14b" x1="0" y1="0" x2="1" y2="1"><stop offset="0" stop-color="#ff8d1c"/><stop offset="1" stop-color="#ff5206"/></linearGradient></defs><path d="M4.05,10 V7.05 A5.05,5.05 0 0 1 14.15,7.05 V10" fill="none" stroke="#ff9628" stroke-width="2"/><rect x="0.4" y="9.6" width="17.5" height="12.5" rx="2" fill="url(#lg14b)"/><text x="9.6" y="18.4" font-family="Liberation Sans" font-weight="bold" font-size="7" fill="#fff" fill-opacity="0.88" text-anchor="middle">VIP</text></svg></div>
<div class="c ct">11000000</div>
<div class="c tt cl"><span class="tx">哈尔滨SEO公司|哈尔滨网站优化</span></div><div class="badge">首页</div>
</div><div class="row even" style="top:738px">
<div class="c kw">上海整站优化</div>
<div class="c rk">第1页 第1位</div>
<div class="spw"><svg class="sp" width="79.5" height="43" viewBox="-1 0 79.5 43"><path d="M0.00,11.90 C6.46,11.90 6.46,11.00 12.92,11.00 C19.38,11.00 19.38,11.00 25.83,11.00 C32.29,11.00 32.29,11.00 38.75,11.00 C45.21,11.00 45.21,9.20 51.67,9.20 C58.12,9.20 58.12,9.20 64.58,9.20 C71.04,9.20 71.04,9.20 77.50,9.20 L77.50,38 L0,38 Z" fill="rgba(200,205,240,0.22)"/><path d="M0.00,11.90 C6.46,11.90 6.46,11.00 12.92,11.00 C19.38,11.00 19.38,11.00 25.83,11.00 C32.29,11.00 32.29,11.00 38.75,11.00 C45.21,11.00 45.21,9.20 51.67,9.20 C58.12,9.20 58.12,9.20 64.58,9.20 C71.04,9.20 71.04,9.20 77.50,9.20" fill="none" stroke="#b8baee" stroke-width="1.5"/></svg></div>
<div class="c ix">6</div>
<div class="c l1"><svg class="lk" width="18" height="24" viewBox="0 0 18 24"><defs><linearGradient id="lg15a" x1="0" y1="0" x2="1" y2="1"><stop offset="0" stop-color="#ff8d1c"/><stop offset="1" stop-color="#ff5206"/></linearGradient></defs><path d="M4.05,10 V7.05 A5.05,5.05 0 0 1 14.15,7.05 V10" fill="none" stroke="#ff9628" stroke-width="2"/><rect x="0.4" y="9.6" width="17.5" height="12.5" rx="2" fill="url(#lg15a)"/><text x="9.6" y="18.4" font-family="Liberation Sans" font-weight="bold" font-size="7" fill="#fff" fill-opacity="0.88" text-anchor="middle">VIP</text></svg></div>
<div class="c l2"><svg class="lk" width="18" height="24" viewBox="0 0 18 24"><defs><linearGradient id="lg15b" x1="0" y1="0" x2="1" y2="1"><stop offset="0" stop-color="#ff8d1c"/><stop offset="1" stop-color="#ff5206"/></linearGradient></defs><path d="M4.05,10 V7.05 A5.05,5.05 0 0 1 14.15,7.05 V10" fill="none" stroke="#ff9628" stroke-width="2"/><rect x="0.4" y="9.6" width="17.5" height="12.5" rx="2" fill="url(#lg15b)"/><text x="9.6" y="18.4" font-family="Liberation Sans" font-weight="bold" font-size="7" fill="#fff" fill-opacity="0.88" text-anchor="middle">VIP</text></svg></div>
<div class="c ct">100000000</div>
<div class="c tt cl"><span class="tx">上海SEO网站优化|SEO外包服务</span></div><div class="badge">首页</div>
</div><div class="row" style="top:781px">
<div class="c kw">烟台seo公司</div>
<div class="c rk">第1页 第1位</div>
<div class="spw"><svg class="sp" width="79.5" height="43" viewBox="-1 0 79.5 43"><path d="M0.00,9.80 C6.46,9.80 6.46,9.80 12.92,9.80 C19.38,9.80 19.38,9.80 25.83,9.80 C32.29,9.80 32.29,9.80 38.75,9.80 C45.21,9.80 45.21,9.80 51.67,9.80 C58.12,9.80 58.12,9.80 64.58,9.80 C71.04,9.80 71.04,9.80 77.50,9.80 L77.50,38 L0,38 Z" fill="rgba(200,205,240,0.22)"/><path d="M0.00,9.80 C6.46,9.80 6.46,9.80 12.92,9.80 C19.38,9.80 19.38,9.80 25.83,9.80 C32.29,9.80 32.29,9.80 38.75,9.80 C45.21,9.80 45.21,9.80 51.67,9.80 C58.12,9.80 58.12,9.80 64.58,9.80 C71.04,9.80 71.04,9.80 77.50,9.80" fill="none" stroke="#b8baee" stroke-width="1.5"/></svg></div>
<div class="c ix">2</div>
<div class="c l1"><svg class="lk" width="18" height="24" viewBox="0 0 18 24"><defs><linearGradient id="lg16a" x1="0" y1="0" x2="1" y2="1"><stop offset="0" stop-color="#ff8d1c"/><stop offset="1" stop-color="#ff5206"/></linearGradient></defs><path d="M4.05,10 V7.05 A5.05,5.05 0 0 1 14.15,7.05 V10" fill="none" stroke="#ff9628" stroke-width="2"/><rect x="0.4" y="9.6" width="17.5" height="12.5" rx="2" fill="url(#lg16a)"/><text x="9.6" y="18.4" font-family="Liberation Sans" font-weight="bold" font-size="7" fill="#fff" fill-opacity="0.88" text-anchor="middle">VIP</text></svg></div>
<div class="c l2"><svg class="lk" width="18" height="24" viewBox="0 0 18 24"><defs><linearGradient id="lg16b" x1="0" y1="0" x2="1" y2="1"><stop offset="0" stop-color="#ff8d1c"/><stop offset="1" stop-color="#ff5206"/></linearGradient></defs><path d="M4.05,10 V7.05 A5.05,5.05 0 0 1 14.15,7.05 V10" fill="none" stroke="#ff9628" stroke-width="2"/><rect x="0.4" y="9.6" width="17.5" height="12.5" rx="2" fill="url(#lg16b)"/><text x="9.6" y="18.4" font-family="Liberation Sans" font-weight="bold" font-size="7" fill="#fff" fill-opacity="0.88" text-anchor="middle">VIP</text></svg></div>
<div class="c ct">5040000</div>
<div class="c tt cl"><span class="tx">烟台SEO|烟台网站优化公司|百度</span></div><div class="badge">首页</div>
</div><div class="row even" style="top:824px">
<div class="c kw">上海优化网站</div>
<div class="c rk">第1页 第1位</div>
<div class="spw"><svg class="sp" width="79.5" height="43" viewBox="-1 0 79.5 43"><path d="M0.00,13.00 C6.46,13.00 6.46,9.90 12.92,9.90 C19.38,9.90 19.38,9.90 25.83,9.90 C32.29,9.90 32.29,9.90 38.75,9.90 C45.21,9.90 45.21,9.90 51.67,9.90 C58.12,9.90 58.12,9.90 64.58,9.90 C71.04,9.90 71.04,9.40 77.50,9.40 L77.50,38 L0,38 Z" fill="rgba(200,205,240,0.22)"/><path d="M0.00,13.00 C6.46,13.00 6.46,9.90 12.92,9.90 C19.38,9.90 19.38,9.90 25.83,9.90 C32.29,9.90 32.29,9.90 38.75,9.90 C45.21,9.90 45.21,9.90 51.67,9.90 C58.12,9.90 58.12,9.90 64.58,9.90 C71.04,9.90 71.04,9.40 77.50,9.40" fill="none" stroke="#b8baee" stroke-width="1.5"/></svg></div>
<div class="c ix">3</div>
<div class="c l1"><svg class="lk" width="18" height="24" viewBox="0 0 18 24"><defs><linearGradient id="lg17a" x1="0" y1="0" x2="1" y2="1"><stop offset="0" stop-color="#ff8d1c"/><stop offset="1" stop-color="#ff5206"/></linearGradient></defs><path d="M4.05,10 V7.05 A5.05,5.05 0 0 1 14.15,7.05 V10" fill="none" stroke="#ff9628" stroke-width="2"/><rect x="0.4" y="9.6" width="17.5" height="12.5" rx="2" fill="url(#lg17a)"/><text x="9.6" y="18.4" font-family="Liberation Sans" font-weight="bold" font-size="7" fill="#fff" fill-opacity="0.88" text-anchor="middle">VIP</text></svg></div>
<div class="c l2"><svg class="lk" width="18" height="24" viewBox="0 0 18 24"><defs><linearGradient id="lg17b" x1="0" y1="0" x2="1" y2="1"><stop offset="0" stop-color="#ff8d1c"/><stop offset="1" stop-color="#ff5206"/></linearGradient></defs><path d="M4.05,10 V7.05 A5.05,5.05 0 0 1 14.15,7.05 V10" fill="none" stroke="#ff9628" stroke-width="2"/><rect x="0.4" y="9.6" width="17.5" height="12.5" rx="2" fill="url(#lg17b)"/><text x="9.6" y="18.4" font-family="Liberation Sans" font-weight="bold" font-size="7" fill="#fff" fill-opacity="0.88" text-anchor="middle">VIP</text></svg></div>
<div class="c ct">36000000</div>
<div class="c tt cl"><span class="tx">上海SEO网站优化|SEO外包服务</span></div><div class="badge">首页</div>
</div><div class="row" style="top:867px">
<div class="c kw">昆明网站优化公司</div>
<div class="c rk">第1页 第1位</div>
<div class="spw"><svg class="sp" width="79.5" height="43" viewBox="-1 0 79.5 43"><path d="M0.00,10.20 C6.46,10.20 6.46,10.20 12.92,10.20 C19.38,10.20 19.38,10.20 25.83,10.20 C32.29,10.20 32.29,10.20 38.75,10.20 C45.21,10.20 45.21,9.30 51.67,9.30 C58.12,9.30 58.12,9.30 64.58,9.30 C71.04,9.30 71.04,9.30 77.50,9.30 L77.50,38 L0,38 Z" fill="rgba(200,205,240,0.22)"/><path d="M0.00,10.20 C6.46,10.20 6.46,10.20 12.92,10.20 C19.38,10.20 19.38,10.20 25.83,10.20 C32.29,10.20 32.29,10.20 38.75,10.20 C45.21,10.20 45.21,9.30 51.67,9.30 C58.12,9.30 58.12,9.30 64.58,9.30 C71.04,9.30 71.04,9.30 77.50,9.30" fill="none" stroke="#b8baee" stroke-width="1.5"/></svg></div>
<div class="c ix">3</div>
<div class="c l1"><svg class="lk" width="18" height="24" viewBox="0 0 18 24"><defs><linearGradient id="lg18a" x1="0" y1="0" x2="1" y2="1"><stop offset="0" stop-color="#ff8d1c"/><stop offset="1" stop-color="#ff5206"/></linearGradient></defs><path d="M4.05,10 V7.05 A5.05,5.05 0 0 1 14.15,7.05 V10" fill="none" stroke="#ff9628" stroke-width="2"/><rect x="0.4" y="9.6" width="17.5" height="12.5" rx="2" fill="url(#lg18a)"/><text x="9.6" y="18.4" font-family="Liberation Sans" font-weight="bold" font-size="7" fill="#fff" fill-opacity="0.88" text-anchor="middle">VIP</text></svg></div>
<div class="c l2"><svg class="lk" width="18" height="24" viewBox="0 0 18 24"><defs><linearGradient id="lg18b" x1="0" y1="0" x2="1" y2="1"><stop offset="0" stop-color="#ff8d1c"/><stop offset="1" stop-color="#ff5206"/></linearGradient></defs><path d="M4.05,10 V7.05 A5.05,5.05 0 0 1 14.15,7.05 V10" fill="none" stroke="#ff9628" stroke-width="2"/><rect x="0.4" y="9.6" width="17.5" height="12.5" rx="2" fill="url(#lg18b)"/><text x="9.6" y="18.4" font-family="Liberation Sans" font-weight="bold" font-size="7" fill="#fff" fill-opacity="0.88" text-anchor="middle">VIP</text></svg></div>
<div class="c ct">10100000</div>
<div class="c tt cl"><span class="tx">昆明SEO|昆明网站优化技术服务</span></div><div class="badge">首页</div>
</div><div class="row even" style="top:910px">
<div class="c kw">沈阳网站优化公司</div>
<div class="c rk">第1页 第1位</div>
<div class="spw"><svg class="sp" width="79.5" height="43" viewBox="-1 0 79.5 43"><path d="M0.00,11.30 C6.46,11.30 6.46,11.30 12.92,11.30 C19.38,11.30 19.38,11.30 25.83,11.30 C32.29,11.30 32.29,10.60 38.75,10.60 C45.21,10.60 45.21,9.60 51.67,9.60 C58.12,9.60 58.12,9.60 64.58,9.60 C71.04,9.60 71.04,9.60 77.50,9.60 L77.50,38 L0,38 Z" fill="rgba(200,205,240,0.22)"/><path d="M0.00,11.30 C6.46,11.30 6.46,11.30 12.92,11.30 C19.38,11.30 19.38,11.30 25.83,11.30 C32.29,11.30 32.29,10.60 38.75,10.60 C45.21,10.60 45.21,9.60 51.67,9.60 C58.12,9.60 58.12,9.60 64.58,9.60 C71.04,9.60 71.04,9.60 77.50,9.60" fill="none" stroke="#b8baee" stroke-width="1.5"/></svg></div>
<div class="c ix">3</div>
<div class="c l1"><svg class="lk" width="18" height="24" viewBox="0 0 18 24"><defs><linearGradient id="lg19a" x1="0" y1="0" x2="1" y2="1"><stop offset="0" stop-color="#ff8d1c"/><stop offset="1" stop-color="#ff5206"/></linearGradient></defs><path d="M4.05,10 V7.05 A5.05,5.05 0 0 1 14.15,7.05 V10" fill="none" stroke="#ff9628" stroke-width="2"/><rect x="0.4" y="9.6" width="17.5" height="12.5" rx="2" fill="url(#lg19a)"/><text x="9.6" y="18.4" font-family="Liberation Sans" font-weight="bold" font-size="7" fill="#fff" fill-opacity="0.88" text-anchor="middle">VIP</text></svg></div>
<div class="c l2"><svg class="lk" width="18" height="24" viewBox="0 0 18 24"><defs><linearGradient id="lg19b" x1="0" y1="0" x2="1" y2="1"><stop offset="0" stop-color="#ff8d1c"/><stop offset="1" stop-color="#ff5206"/></linearGradient></defs><path d="M4.05,10 V7.05 A5.05,5.05 0 0 1 14.15,7.05 V10" fill="none" stroke="#ff9628" stroke-width="2"/><rect x="0.4" y="9.6" width="17.5" height="12.5" rx="2" fill="url(#lg19b)"/><text x="9.6" y="18.4" font-family="Liberation Sans" font-weight="bold" font-size="7" fill="#fff" fill-opacity="0.88" text-anchor="middle">VIP</text></svg></div>
<div class="c ct">12000000</div>
<div class="c tt cl"><span class="tx">沈阳SEO,沈阳网站优化,沈阳网站</span></div><div class="badge">首页</div>
</div>
<div class="bottomline"></div>
<div class="pg" style="left:-30.6px;top:994px"><span class="pn">3</span></div><div class="pg" style="left:8.4px;top:994px"><span class="pn">4</span></div><div class="pg" style="left:47.4px;top:994px"><span class="pn">5</span></div><div class="pg" style="left:86.4px;top:994px"><span class="pn">6</span></div><div class="pg" style="left:125.4px;top:994px"><span class="pn">7</span></div><div class="pg" style="left:164.4px;top:994px"><span class="pn">8</span></div><div class="pg" style="left:203.4px;top:994px"><span class="pn">9</span></div><div class="pg" style="left:242.4px;top:994px"><span class="pn">10</span></div><div class="pg" style="left:281.4px;top:994px"><span class="pn">11</span></div><div class="pg" style="left:320.4px;top:994px"><span class="pn">12</span></div><div class="pg" style="left:359.4px;top:994px"><span class="pn">13</span></div><div class="pg" style="left:398.4px;top:994px"><span class="pn">14</span></div><div class="pg" style="left:437.4px;top:994px"><span class="pn">15</span></div><div class="pg" style="left:476.4px;top:994px"><span class="pn">16</span></div><div class="pg" style="left:515.4px;top:994px"><span class="pn">17</span></div><div class="pg" style="left:554.4px;top:994px"><span class="pn">18</span></div><div class="pg" style="left:593.4px;top:994px"><span class="pn">19</span></div><div class="pg" style="left:632.4px;top:994px"><span class="pn">20</span></div><div class="pg" style="left:671.4px;top:994px"><span class="pn">21</span></div><div class="pg" style="left:710.4px;top:994px"><span class="pn">22</span></div><div class="pg" style="left:749.4px;top:994px"><span class="pn">23</span></div><div class="pg" style="left:788.4px;top:994px"><span class="pn">24</span></div><div class="pg" style="left:827.4px;top:994px"><span class="pn">25</span></div><div class="pg" style="left:866.4px;top:994px"><span class="pn">26</span></div><div class="pg" style="left:905.4px;top:994px"><span class="pn">27</span></div><div class="pg" style="left:944.4px;top:994px"><span class="pn">28</span></div><div class="pg" style="left:983.4px;top:994px"><span class="pn">29</span></div><div class="pg" style="left:1022.4px;top:994px"><span class="pn">30</span></div><div class="pg" style="left:-30.6px;top:1036px"><span class="pn">33</span></div><div class="pg" style="left:8.4px;top:1036px"><span class="pn">34</span></div><div class="pg" style="left:47.4px;top:1036px"><span class="pn">35</span></div><div class="pg" style="left:86.4px;top:1036px"><span class="pn">36</span></div><div class="pg" style="left:125.4px;top:1036px"><span class="pn">37</span></div><div class="pg" style="left:164.4px;top:1036px"><span class="pn">38</span></div><div class="pg" style="left:203.4px;top:1036px"><span class="pn">39</span></div><div class="pg" style="left:242.4px;top:1036px"><span class="pn">40</span></div><div class="pg" style="left:281.4px;top:1036px"><span class="pn">41</span></div><div class="pg" style="left:320.4px;top:1036px"><span class="pn">42</span></div><div class="pg" style="left:359.4px;top:1036px"><span class="pn">43</span></div><div class="pg" style="left:398.4px;top:1036px"><span class="pn">44</span></div><div class="pg" style="left:437.4px;top:1036px"><span class="pn">45</span></div><div class="pg" style="left:476.4px;top:1036px"><span class="pn">46</span></div><div class="pg" style="left:515.4px;top:1036px"><span class="pn">47</span></div><div class="pg" style="left:554.4px;top:1036px"><span class="pn">48</span></div><div class="pg" style="left:593.4px;top:1036px"><span class="pn">49</span></div><div class="pg" style="left:632.4px;top:1036px"><span class="pn">50</span></div><div class="pg vip" style="left:671px;top:1036px"><span class="pn" style="transform:scaleX(0.88)">...500</span><span class="tri"></span><span class="vtx">VIP</span></div>
</body></html>
